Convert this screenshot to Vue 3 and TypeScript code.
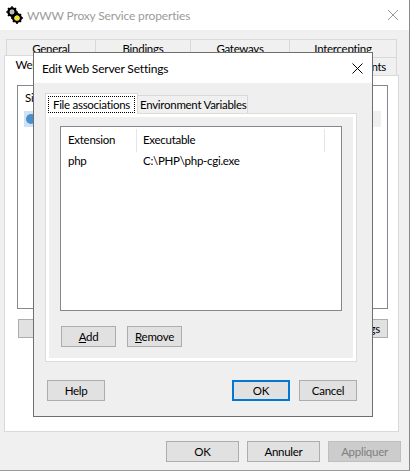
<script setup lang="ts">
const outerTabs = [
  { label: 'General', width: 90 },
  { label: 'Bindings', width: 95 },
  { label: 'Gateways', width: 99 },
  { label: 'Intercepting', width: 107 },
]
const rows = [{ ext: 'php', exe: 'C:\\PHP\\php-cgi.exe' }]
</script>

<template>
  <div class="window">
    <header class="title">
      <svg class="gear" width="17" height="18" viewBox="0 0 17 18">
        <g fill="none" stroke="#000">
          <circle cx="6" cy="6" r="3.6" stroke-width="2.4" />
          <circle cx="11" cy="12" r="3.8" stroke-width="2.4" />
          <path d="M6 .3v2M6 9.7v2M.3 6h2M9.7 6h2M2 2l1.4 1.4M10 2 8.6 3.4M2 10l1.4-1.4" stroke-width="1.6" />
          <path d="M11 6v2M11 16v2M5 12h2M15 12h2M7 8l1.2 1.2M15 8l-1.2 1.2M7 16l1.2-1.2M15 16l-1.2-1.2" stroke-width="1.6" />
        </g>
        <circle cx="6" cy="6" r="2.2" fill="#b9b9b9" />
        <circle cx="11" cy="12" r="2.5" fill="#f2e31c" />
      </svg>
      <span class="title-text">WWW Proxy Service properties</span>
      <svg class="win-close" width="10" height="10" viewBox="0 0 10 10">
        <path d="M0 0l10 10M10 0 0 10" stroke="#9a9a9a" stroke-width="1" fill="none" />
      </svg>
    </header>

    <div class="sheet">
      <div class="tabrow top">
        <div v-for="t in outerTabs" :key="t.label" class="otab" :style="{ width: t.width + 'px' }">{{ t.label }}</div>
      </div>
      <div class="tabrow second">
        <div class="otab selected">Web Servers</div>
        <div class="spacer"></div>
        <div class="otab last">Clients</div>
      </div>
      <div class="page">
        <div class="group">
          <div class="group-label">Sites</div>
          <div class="site-row">
            <div class="site-sel"><span class="globe"></span></div>
          </div>
        </div>
        <div class="page-buttons">
          <button class="btn small">Add</button>
          <button class="btn small">Edit Settings</button>
        </div>
      </div>
      <footer class="footer">
        <button class="btn foot">OK</button>
        <button class="btn foot">Annuler</button>
        <button class="btn foot disabled">Appliquer</button>
      </footer>
    </div>

    <section class="dialog">
      <div class="dlg-title">
        <span>Edit Web Server Settings</span>
        <svg width="11" height="11" viewBox="0 0 11 11">
          <path d="M.5.5l10 10M10.5.5l-10 10" stroke="#000" stroke-width="1" fill="none" />
        </svg>
      </div>
      <div class="dlg-body">
        <div class="dtabs">
          <div class="dtab active"><span class="focus">File associations</span></div>
          <div class="dtab">Environment Variables</div>
        </div>
        <div class="dpage">
          <div class="list">
            <div class="list-head">
              <div class="col-ext">Extension</div>
              <div class="col-exe">Executable</div>
            </div>
            <div v-for="r in rows" :key="r.ext" class="list-row">
              <div class="cell-ext">{{ r.ext }}</div>
              <div class="cell-exe">{{ r.exe }}</div>
            </div>
          </div>
          <div class="list-buttons">
            <button class="btn dlg-small"><u>A</u>dd</button>
            <button class="btn dlg-small"><u>R</u>emove</button>
          </div>
        </div>
        <div class="dlg-actions">
          <button class="btn dlg-main">Help</button>
          <div class="spacer"></div>
          <button class="btn dlg-main primary">OK</button>
          <button class="btn dlg-main">Cancel</button>
        </div>
      </div>
    </section>
  </div>
</template>

<style>
html, body { margin: 0; padding: 0; background: #fff; }
</style>

<style scoped>
.window {
  position: relative;
  width: 410px;
  height: 471px;
  box-sizing: border-box;
  display: flex;
  flex-direction: column;
  background: #f0f0f0;
  border-right: 1px solid #8a8a8a;
  border-bottom: 1px solid #9a9a9a;
  font-family: "Lato", "Open Sans", sans-serif;
  font-size: 11.5px;
  letter-spacing: -0.28px;
  color: #000;
  overflow: hidden;
}
.title {
  height: 30px;
  flex: none;
  background: #fff;
  display: flex;
  align-items: center;
  padding: 0 11px 0 6px;
}
.gear { flex: none; margin-right: 4px; }
.title-text { color: #9b9b9b; font-size: 12px; letter-spacing: -0.17px; flex: 1; }
.sheet { flex: 1; display: flex; flex-direction: column; padding: 9px 0 0 4px; }
.tabrow { display: flex; height: 18px; flex: none; }
.tabrow.top { margin-left: 2px; }
.tabrow.second { width: 393px; }
.spacer { flex: 1; }
.otab {
  box-sizing: border-box;
  border: 1px solid #d9d9d9;
  border-left-width: 0;
  border-bottom: 0;
  background: #f0f0f0;
  text-align: center;
  line-height: 18px;
  height: 18px;
}
.tabrow.top .otab:first-child { border-left-width: 1px; }
.otab.selected {
  width: 84px;
  height: 21px;
  margin-top: -2px;
  background: #fff;
  border-left-width: 1px;
  border-right-width: 1px;
  line-height: 18px;
  position: relative;
  z-index: 1;
}
.otab.last { width: 80px; text-align: right; padding-right: 10px; border-left-width: 1px; }
.page {
  box-sizing: border-box;
  width: 395px;
  height: 357px;
  flex: none;
  background: #fff;
  border: 1px solid #d9d9d9;
  padding: 9px 10px 0 12px;
}
.group {
  box-sizing: border-box;
  height: 224px;
  border: 1px solid #828790;
  padding: 3px 6px 0 6px;
}
.group-label { height: 18px; line-height: 18px; padding-left: 1px; margin-bottom: 4px; }
.site-row { height: 16px; background: #f0f0f0; }
.site-sel { width: 60px; height: 16px; background: #cfe1f3; display: flex; align-items: center; }
.globe { width: 10px; height: 10px; border-radius: 50%; margin-left: 2px; background: #4a90c8; }
.page-buttons { display: flex; justify-content: space-between; margin-top: 10px; padding-left: 1px; }
.btn {
  box-sizing: border-box;
  margin: 0;
  padding: 0;
  font: inherit;
  letter-spacing: inherit;
  color: #000;
  background: #e1e1e1;
  border: 1px solid #adadad;
  display: block;
}
.btn.small { width: 90px; height: 19px; }
.btn.small:last-child { text-align: right; padding-right: 7px; }
.footer { display: flex; justify-content: flex-end; gap: 8px; margin-top: 9px; width: 397px; }
.btn.foot { width: 73px; height: 21px; }
.btn.disabled { background: #cccccc; border-color: #bfbfbf; color: #7f7f7f; }
.dialog {
  position: absolute;
  left: 33px;
  top: 52px;
  z-index: 2;
  width: 340px;
  height: 365px;
  box-sizing: border-box;
  border: 1px solid #6e6e6e;
  background: #efefef;
  display: flex;
  flex-direction: column;
}
.dlg-title {
  height: 30px;
  flex: none;
  background: #fff;
  display: flex;
  align-items: center;
  justify-content: space-between;
  padding: 0 9px 0 8px;
  font-size: 12px;
  letter-spacing: -0.17px;
}
.dlg-body { flex: 1; display: flex; flex-direction: column; padding: 10px 15px 0 11px; }
.dtabs { display: flex; align-items: flex-end; height: 20px; flex: none; }
.dtab {
  box-sizing: border-box;
  height: 18px;
  line-height: 17px;
  padding: 0 2px;
  width: 110px;
  text-align: center;
  background: #f0f0f0;
  border: 1px solid #d9d9d9;
  border-bottom: 0;
  border-left: 0;
  white-space: nowrap;
}
.dtab.active {
  width: 93px;
  height: 21px;
  background: #fff;
  border-left: 1px solid #d9d9d9;
  padding: 2px;
  position: relative;
  z-index: 1;
  margin-bottom: -1px;
}
.focus { display: block; border: 1px dotted #000; line-height: 15px; height: 17px; box-sizing: border-box; }
.dpage {
  box-sizing: border-box;
  height: 249px;
  flex: none;
  border: 1px solid #dcdcdc;
  box-shadow: inset 0 0 0 3px #fff;
  padding: 12px 15px 0 14px;
}
.list {
  box-sizing: border-box;
  height: 185px;
  width: 282px;
  background: #fff;
  border: 1px solid #828790;
}
.list-head { display: flex; height: 25px; padding-top: 2px; box-sizing: border-box; }
.col-ext, .cell-ext { width: 76px; padding-left: 7px; box-sizing: border-box; flex: none; }
.col-exe, .cell-exe { padding-left: 6px; box-sizing: border-box; }
.col-ext { border-right: 1px solid #e5e5e5; line-height: 22px; }
.col-exe { width: 188px; border-right: 1px solid #e5e5e5; line-height: 22px; }
.list-row { display: flex; height: 18px; line-height: 18px; }
.list-buttons { display: flex; gap: 11px; margin-top: 15px; padding-left: 1px; }
.btn.dlg-small { width: 55px; height: 21px; }
.dlg-actions { display: flex; gap: 9px; margin-top: 18px; padding: 0 0 0 2px; }
.btn.dlg-main { width: 58px; height: 21px; }
.btn.primary { border: 2px solid #0078d7; }
</style>
